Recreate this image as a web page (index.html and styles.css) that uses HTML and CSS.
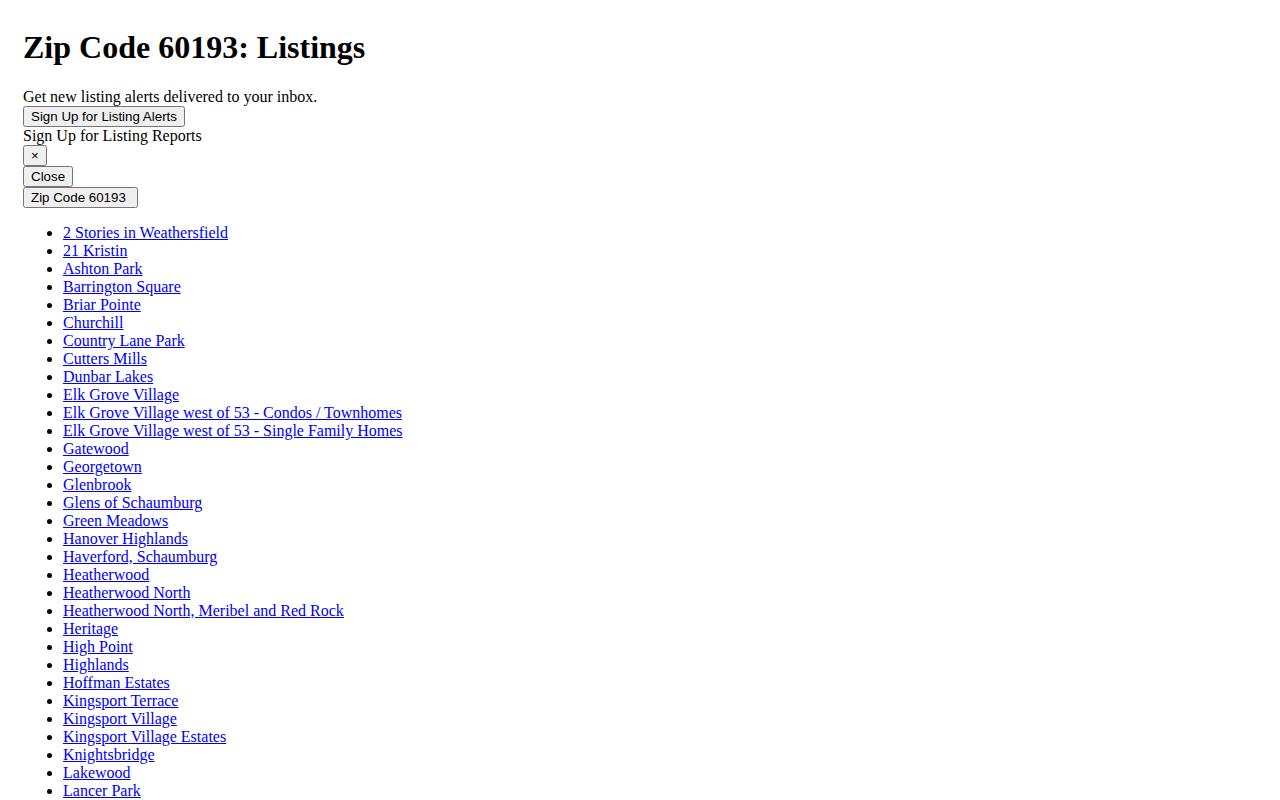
FILE: index.html
```html
<!DOCTYPE html>
<html lang="en">
<head>
<meta charset="utf-8">
<title>Zip Code 60193: Listings</title>
<link rel="stylesheet" href="styles.css">
</head>
<body>
<div class="page">
  <h1 class="title">Zip Code 60193: Listings</h1>
  <div class="alerts">
    <div class="alerts-text">Get new listing alerts delivered to your inbox.</div>
    <button class="btn" type="button">Sign Up for Listing Alerts</button>
    <div class="modal">
      <div class="modal-title">Sign Up for Listing Reports</div>
      <button class="btn" type="button">×</button>
      <div><button class="btn" type="button">Close</button></div>
    </div>
  </div>
  <div class="zip"><button class="btn" type="button">Zip Code 60193&nbsp;</button></div>
  <ul class="areas">
    <li><a href="#">2 Stories in Weathersfield</a></li>
    <li><a href="#">21 Kristin</a></li>
    <li><a href="#">Ashton Park</a></li>
    <li><a href="#">Barrington Square</a></li>
    <li><a href="#">Briar Pointe</a></li>
    <li><a href="#">Churchill</a></li>
    <li><a href="#">Country Lane Park</a></li>
    <li><a href="#">Cutters Mills</a></li>
    <li><a href="#">Dunbar Lakes</a></li>
    <li><a href="#">Elk Grove Village</a></li>
    <li><a href="#">Elk Grove Village west of 53 - Condos / Townhomes</a></li>
    <li><a href="#">Elk Grove Village west of 53 - Single Family Homes</a></li>
    <li><a href="#">Gatewood</a></li>
    <li><a href="#">Georgetown</a></li>
    <li><a href="#">Glenbrook</a></li>
    <li><a href="#">Glens of Schaumburg</a></li>
    <li><a href="#">Green Meadows</a></li>
    <li><a href="#">Hanover Highlands</a></li>
    <li><a href="#">Haverford, Schaumburg</a></li>
    <li><a href="#">Heatherwood</a></li>
    <li><a href="#">Heatherwood North</a></li>
    <li><a href="#">Heatherwood North, Meribel and Red Rock</a></li>
    <li><a href="#">Heritage</a></li>
    <li><a href="#">High Point</a></li>
    <li><a href="#">Highlands</a></li>
    <li><a href="#">Hoffman Estates</a></li>
    <li><a href="#">Kingsport Terrace</a></li>
    <li><a href="#">Kingsport Village</a></li>
    <li><a href="#">Kingsport Village Estates</a></li>
    <li><a href="#">Knightsbridge</a></li>
    <li><a href="#">Lakewood</a></li>
    <li><a href="#">Lancer Park</a></li>
  </ul>
</div>
</body>
</html>
```
FILE: styles.css
```css
body {
  margin: 8px;
  font-family: "Liberation Serif", "Times New Roman", serif;
  font-size: 16px;
  color: #000;
  background: #fff;
}
.page {
  padding: 0 15px;
}
.title {
  font-size: 32px;
  font-weight: bold;
  margin: 21.44px 0;
}
.btn {
  font-family: "Liberation Sans", Arial, sans-serif;
  font-size: 13.333px;
}
.areas {
  margin: 16px 0;
  padding-left: 40px;
}
.areas a {
  color: #0000ee;
}
```
